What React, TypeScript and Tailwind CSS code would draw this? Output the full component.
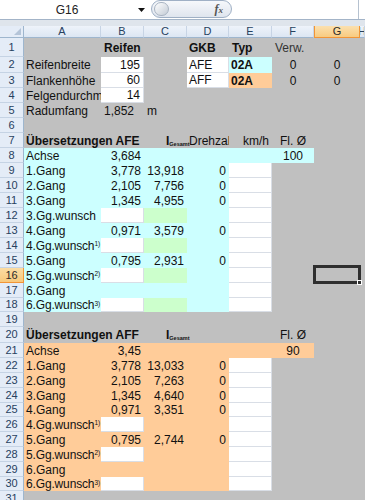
import type { ReactNode } from "react";
import clsx from "clsx";

type Cell = {
  t?: ReactNode;
  bg?: "g" | "c" | "o" | "w" | "l";
  al?: "l" | "r" | "c";
  b?: boolean;
  ov?: boolean;
  cls?: string;
  sel?: boolean;
};

const BG = {
  g: "bg-[#c0c0c0]",
  c: "bg-[#ccffff]",
  o: "bg-[#ffcc99]",
  w: "bg-white border-r border-b border-[#d9dee6]",
  l: "bg-[#ccffcc]",
};

const GRID = "grid grid-cols-[24px_77px_43px_43px_42px_43px_42px_46px_5px]";
const COLS = ["A", "B", "C", "D", "E", "F", "G", "H"];

const Wunsch = ({ n, s }: { n: number; s: number }) => (
  <span className="tracking-[-0.15px]">
    {n}.Gg.wunsch<sup className="text-[6.5px] tracking-normal">{s})</sup>
  </span>
);

const IGesamt = () => (
  <span className="font-bold">
    I<sub className="text-[5.5px]">Gesamt</sub>
  </span>
);

// one gear row of a colored block
const gear = (
  fill: "c" | "o",
  name: ReactNode,
  b = "",
  c = "",
  d = "",
  bBg?: "w",
  cBg?: "l"
): Cell[] => [
  { t: name, bg: fill, cls: "text-[11.7px]", ov: typeof name !== "string" },
  { t: b, bg: bBg ?? fill, al: "r" },
  { t: c, bg: cBg ?? fill, al: "r" },
  { t: d, bg: fill, al: "r" },
  { bg: "w" },
  {},
  {},
  {},
];

const rows: { h: number; cells: Cell[] }[] = [
  {
    h: 19,
    cells: [
      {},
      { t: "Reifen", b: true, cls: "pl-[3px]" },
      {},
      { t: "GKB", b: true },
      { t: "Typ", b: true, cls: "pl-[3px]" },
      { t: "Verw.", cls: "pl-[3px] text-[#333]" },
      {},
      {},
    ],
  },
  {
    h: 16,
    cells: [
      { t: "Reifenbreite", cls: "text-[11.7px]" },
      { t: "195", bg: "w", al: "r" },
      {},
      { t: "AFE", bg: "w" },
      { t: "02A", bg: "c", b: true },
      { t: "0", al: "c" },
      { t: "0", al: "c" },
      {},
    ],
  },
  {
    h: 15,
    cells: [
      { t: "Flankenhöhe", cls: "text-[11.7px]" },
      { t: "60", bg: "w", al: "r" },
      {},
      { t: "AFF", bg: "w" },
      { t: "02A", bg: "o", b: true },
      { t: "0", al: "c" },
      { t: "0", al: "c" },
      {},
    ],
  },
  {
    h: 15,
    cells: [{ t: "Felgendurchmesser", cls: "text-[11.7px]" }, { t: "14", bg: "w", al: "r" }, {}, {}, {}, {}, {}, {}],
  },
  {
    h: 15,
    cells: [
      { t: "Radumfang", cls: "text-[11.7px]" },
      { t: "1,852", al: "r", cls: "pr-[10px]" },
      { t: "m", cls: "pl-[3px]" },
      {},
      {},
      {},
      {},
      {},
    ],
  },
  { h: 15, cells: [{}, {}, {}, {}, {}, {}, {}, {}] },
  {
    h: 15,
    cells: [
      { t: "Übersetzungen AFE", b: true, ov: true },
      {},
      { t: <IGesamt />, ov: true, cls: "pl-[22px]" },
      { t: "Drehzahl" },
      { t: "km/h", al: "r" },
      { t: "Fl. Ø", al: "c" },
      {},
      {},
    ],
  },
  {
    h: 15,
    cells: [
      { t: "Achse", bg: "c", cls: "text-[11.7px]" },
      { t: "3,684", bg: "c", al: "r" },
      { bg: "c" },
      { bg: "c" },
      { bg: "c" },
      { t: "100", bg: "c", al: "c" },
      {},
      {},
    ],
  },
  { h: 15, cells: gear("c", "1.Gang", "3,778", "13,918", "0") },
  { h: 15, cells: gear("c", "2.Gang", "2,105", "7,756", "0") },
  { h: 15, cells: gear("c", "3.Gang", "1,345", "4,955", "0") },
  { h: 15, cells: gear("c", "3.Gg.wunsch", "", "", "", "w", "l") },
  { h: 15, cells: gear("c", "4.Gang", "0,971", "3,579", "0") },
  { h: 15, cells: gear("c", <Wunsch n={4} s={1} />, "", "", "", "w", "l") },
  { h: 15, cells: gear("c", "5.Gang", "0,795", "2,931", "0") },
  {
    h: 15,
    cells: gear("c", <Wunsch n={5} s={2} />, "", "", "", "w", "l").map((c, i) => (i === 6 ? { sel: true } : c)),
  },
  { h: 15, cells: gear("c", "6.Gang") },
  { h: 14, cells: gear("c", <Wunsch n={6} s={3} />, "", "", "", "w", "l") },
  { h: 15, cells: [{}, {}, {}, {}, {}, {}, {}, {}] },
  {
    h: 16,
    cells: [
      { t: "Übersetzungen AFF", b: true, ov: true },
      {},
      { t: <IGesamt />, ov: true, cls: "pl-[22px]" },
      {},
      {},
      { t: "Fl. Ø", al: "c" },
      {},
      {},
    ],
  },
  {
    h: 15,
    cells: [
      { t: "Achse", bg: "o", cls: "text-[11.7px]" },
      { t: "3,45", bg: "o", al: "r" },
      { bg: "o" },
      { bg: "o" },
      { bg: "o" },
      { t: "90", bg: "o", al: "c" },
      {},
      {},
    ],
  },
  { h: 15, cells: gear("o", "1.Gang", "3,778", "13,033", "0") },
  { h: 15, cells: gear("o", "2.Gang", "2,105", "7,263", "0") },
  { h: 15, cells: gear("o", "3.Gang", "1,345", "4,640", "0") },
  { h: 14, cells: gear("o", "4.Gang", "0,971", "3,351", "0") },
  { h: 15, cells: gear("o", <Wunsch n={4} s={1} />, "", "", "", "w") },
  { h: 15, cells: gear("o", "5.Gang", "0,795", "2,744", "0") },
  { h: 15, cells: gear("o", <Wunsch n={5} s={2} />, "", "", "", "w") },
  { h: 15, cells: gear("o", "6.Gang") },
  { h: 14, cells: gear("o", <Wunsch n={6} s={3} />, "", "", "", "w") },
  { h: 15, cells: [{}, {}, {}, {}, {}, {}, {}, {}] },
];

const FormulaBar = () => (
  <div className="h-[20px] flex bg-white border-b border-[#a3b4c8]">
    <div className="w-[134px] flex items-center justify-center text-[12px] text-[#222]">G16</div>
    <div className="w-[14px] flex items-center justify-center">
      <svg width="7" height="4" viewBox="0 0 7 4">
        <path d="M0 0h7L3.5 4z" fill="#111" />
      </svg>
    </div>
    <div className="w-[3px]" />
    <div className="w-[81px] h-[18px] flex items-center justify-between rounded-full border border-[#9fb0c5] bg-gradient-to-b from-[#f6f8fb] to-[#dfe5ee] pl-[2px] pr-[8px]">
      <div className="w-[15px] h-[14px] rounded-full border border-[#a9b4c2] bg-gradient-to-br from-white to-[#c4ccd6]" />
      <span className="font-['Liberation_Serif',serif] italic font-bold text-[12px] text-[#555]">
        f<span className="text-[9px]">x</span>
      </span>
    </div>
    <div className="w-[127px] border-r border-[#b6c2d0]" />
  </div>
);

const ColHeader = () => (
  <div className={clsx(GRID, "h-[12px]")}>
    <div className="flex items-end justify-end pr-[2px] pb-[2px] bg-[#e4ecf7] border-r border-b border-[#9eb6ce]">
      <svg width="7" height="7" viewBox="0 0 7 7">
        <path d="M7 0V7H0z" fill="#b4c4d8" />
      </svg>
    </div>
    {COLS.map((c) => (
      <div
        key={c}
        className={clsx(
          "flex items-center justify-center overflow-hidden text-[11px] leading-none border-b",
          c === "G"
            ? "bg-gradient-to-b from-[#fbe0ae] to-[#f8cb80] text-[#2b2b2b] border-[#f29536] border-l border-r"
            : "bg-gradient-to-b from-[#eef3fa] to-[#dce6f3] text-[#27415f] border-r border-r-[#c7d4e5] border-b-[#9eb6ce]"
        )}
      >
        {c}
      </div>
    ))}
  </div>
);

const CellView = ({ cell }: { cell: Cell }) => (
  <div
    className={clsx(
      "flex items-center whitespace-nowrap text-[12px] leading-none text-[#111]",
      BG[cell.bg ?? "g"],
      cell.ov ? "relative z-10 overflow-visible" : "overflow-hidden",
      cell.al === "r" ? "justify-end pr-[3px]" : cell.al === "c" ? "justify-center" : "pl-[2px]",
      cell.b && "font-bold text-[12.5px]",
      cell.sel && "relative overflow-visible",
      cell.cls
    )}
  >
    {cell.t}
    {cell.sel && (
      <div className="absolute -left-[1px] -top-[3px] -right-[1px] -bottom-[1px] border-[3px] border-[#2f2f2f] z-20">
        <div className="absolute -right-[4px] -bottom-[4px] w-[5px] h-[5px] bg-[#2f2f2f] border border-white" />
      </div>
    )}
  </div>
);

export default function App() {
  return (
    <div className="w-[365px] h-[500px] overflow-hidden bg-white font-['Liberation_Sans',Arial,sans-serif]">
      <FormulaBar />
      <div className="h-[6px] bg-[#dfe5ec]" />
      <ColHeader />
      {rows.map((r, i) => (
        <div key={i} className={GRID} style={{ height: r.h }}>
          <div
            className={clsx(
              "flex items-center justify-center text-[11px] leading-none border-r border-b",
              i === 15
                ? "bg-gradient-to-b from-[#fbdca3] to-[#f8c97c] text-[#2b2b2b] border-[#f29536]"
                : "bg-[#e4ecf7] text-[#27415f] border-r-[#9eb6ce] border-b-[#c5d3e4]"
            )}
          >
            {i + 1}
          </div>
          {r.cells.map((c, j) => (
            <CellView key={j} cell={c} />
          ))}
        </div>
      ))}
    </div>
  );
}
